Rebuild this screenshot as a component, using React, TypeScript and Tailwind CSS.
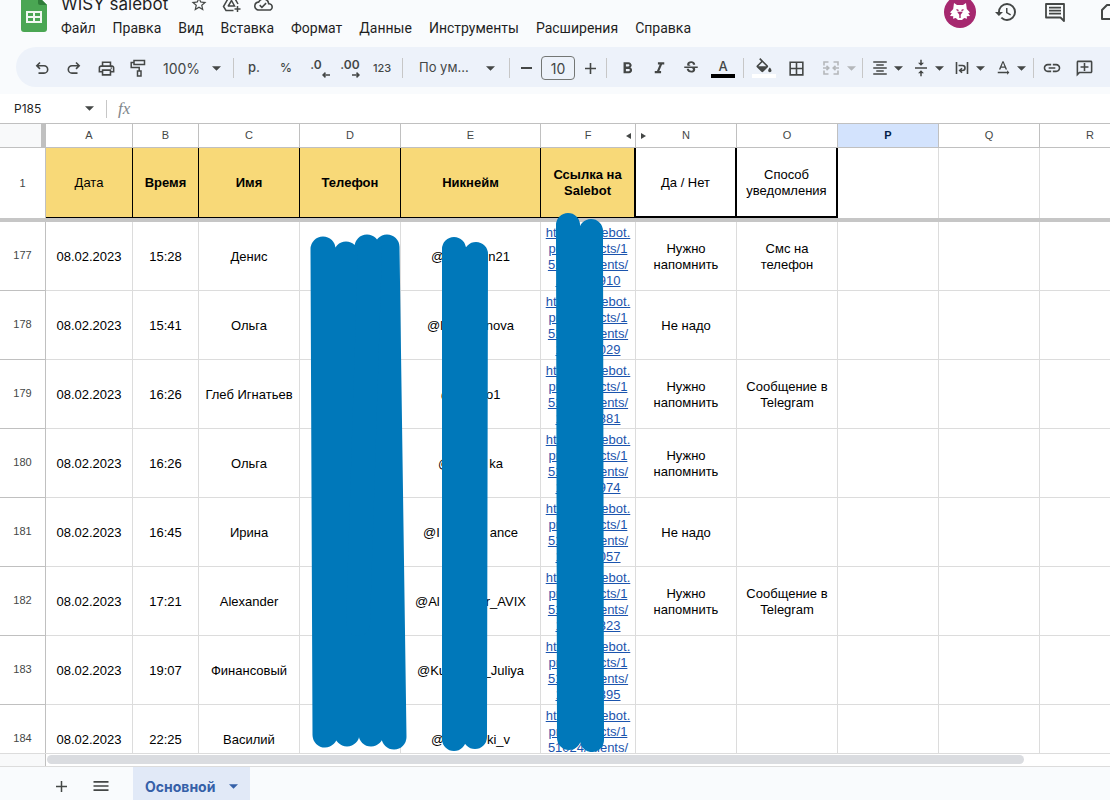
import type { ReactNode } from "react";
import clsx from "clsx";
import {
  MdBorderAll,
  MdFormatAlignCenter,
  MdFormatBold,
  MdFormatItalic,
  MdHistory,
  MdInsertLink,
  MdMenu,
  MdOutlineAddComment,
  MdOutlineCloudDone,
  MdOutlinePrint,
  MdStarOutline,
  MdStrikethroughS,
  MdTextRotationNone,
  MdVerticalAlignCenter,
} from "react-icons/md";

interface Row {
  id: number;
  time: string;
  name: string;
  // the middle of the nickname is painted over, so only its ends are kept
  nick: { start: string; end: string; width: number };
  client?: string;
  answer?: string;
  channel?: string;
}

const menus = [
  "Файл",
  "Правка",
  "Вид",
  "Вставка",
  "Формат",
  "Данные",
  "Инструменты",
  "Расширения",
  "Справка",
];

const columns = [
  { id: "A", width: "w-[87px]", title: "Дата" },
  { id: "B", width: "w-[66px]", title: "Время", bold: true },
  { id: "C", width: "w-[101px]", title: "Имя", bold: true },
  { id: "D", width: "w-[101px]", title: "Телефон", bold: true },
  { id: "E", width: "w-[140px]", title: "Никнейм", bold: true },
  { id: "F", width: "w-[95px]", title: "Ссылка на Salebot", bold: true },
  { id: "N", width: "w-[101px]", title: "Да / Нет" },
  { id: "O", width: "w-[101px]", title: "Способ уведомления" },
  { id: "P", width: "w-[101px]", title: "" },
  { id: "Q", width: "w-[101px]", title: "" },
  { id: "R", width: "w-[101px]", title: "" },
];

const rows: Row[] = [
  { id: 177, time: "15:28", name: "Денис", nick: { start: "@", end: "n21", width: 79 }, client: "100000910", answer: "Нужно напомнить", channel: "Смс на телефон" },
  { id: 178, time: "15:41", name: "Ольга", nick: { start: "@l", end: "nova", width: 87 }, client: "100000029", answer: "Не надо" },
  { id: 179, time: "16:26", name: "Глеб Игнатьев", nick: { start: "@", end: "o1", width: 60 }, client: "100000881", answer: "Нужно напомнить", channel: "Сообщение в Telegram" },
  { id: 180, time: "16:26", name: "Ольга", nick: { start: "@", end: "ka", width: 65 }, client: "100000974", answer: "Нужно напомнить" },
  { id: 181, time: "16:45", name: "Ирина", nick: { start: "@I", end: "ance", width: 95 }, client: "100000057", answer: "Не надо" },
  { id: 182, time: "17:21", name: "Alexander", nick: { start: "@Al", end: "r_AVIX", width: 111 }, client: "100000323", answer: "Нужно напомнить", channel: "Сообщение в Telegram" },
  { id: 183, time: "19:07", name: "Финансовый", nick: { start: "@Ku", end: "_Juliya", width: 107 }, client: "100000395" },
  { id: 184, time: "22:25", name: "Василий", nick: { start: "@", end: "ki_v", width: 79 } },
];

const Caret = ({ className }: { className?: string }) => (
  <svg viewBox="0 0 10 5" className={clsx("h-[5px] w-[9px] shrink-0", className)} fill="currentColor">
    <path d="M0 0h10L5 5z" />
  </svg>
);

const Separator = ({ tight }: { tight?: boolean }) => (
  <span className={clsx("h-5 w-px shrink-0 bg-[#c7c7c7]", tight ? "mx-0.5" : "mx-1")} />
);

const Tool = ({ label, children }: { label: string; children: ReactNode }) => (
  <button aria-label={label} className="flex h-8 w-8 shrink-0 items-center justify-center rounded text-[13px] font-medium">
    {children}
  </button>
);

const MenuTool = ({ label, children }: { label: string; children: ReactNode }) => (
  <button aria-label={label} className="flex h-8 w-[41px] shrink-0 items-center pl-1">
    {children}
    <Caret className="ml-[5px] w-2" />
  </button>
);

const SheetsLogo = () => (
  <svg viewBox="0 0 26 36" className="h-9 w-[26px]">
    <path d="M3 0h14l9 9v24a3 3 0 0 1-3 3H3a3 3 0 0 1-3-3V3a3 3 0 0 1 3-3z" fill="#4aa653" />
    <path d="M17 0l9 9h-7a2 2 0 0 1-2-2z" fill="#2f7d39" />
    <path d="M5 15h16v12H5zM7 17v3h5v-3zm7 0v3h5v-3zm-7 5v3h5v-3zm7 0v3h5v-3z" fill="#f1f8f1" fillRule="evenodd" />
  </svg>
);

const Avatar = () => (
  <svg viewBox="0 0 32 32" className="h-8 w-8">
    <circle cx="16" cy="16" r="16" fill="#a6286f" />
    <path
      d="M10 7l3 2h6l3-2 .8 6 3.200 3.500-1.800 .7 1.800 2.800-3.300 .2.300 2.500-2.800-.7-2.200 2h-4l-2.200-2-2.800 .7.300-2.500-3.300-.2 1.800-2.800-1.800-.7 3.200-3.500z"
      fill="#fff"
    />
    <path d="M12.500 13.500l2 1.200M19.500 13.500l-2 1.200M14.500 16.500h3L16 18.500zM16 18v4" stroke="#a6286f" strokeWidth="1.400" fill="#a6286f" />
  </svg>
);

const CommentsIcon = () => (
  <svg viewBox="0 0 24 24" className="h-6 w-6" fill="none" stroke="currentColor" strokeWidth="1.800">
    <path d="M3 4h18v17l-3.500-3.500H3z" strokeLinejoin="round" />
    <path d="M6 7.700h12M6 10.700h12M6 13.700h12" />
  </svg>
);

const DriveAddIcon = () => (
  <svg viewBox="0 0 20 18" className="h-[18px] w-5" fill="none" stroke="currentColor" strokeWidth="1.500">
    <path d="M11.500 15.500H4L1.500 11.500 7 2h5l4 7" />
    <path d="M6 11.500l3.500-6 3 5.500H6M15.500 11v6M12.500 14h6" />
  </svg>
);

const UndoIcon = ({ className }: { className?: string }) => (
  <svg viewBox="0 0 14 14" className={clsx("h-3.5 w-3.5", className)} fill="none" stroke="currentColor" strokeWidth="1.600">
    <path d="M5 1.500L1.800 4.700 5 7.900M2 4.700h7a3.700 3.700 0 0 1 0 7.400H3.500" />
  </svg>
);

const PaintIcon = () => (
  <svg viewBox="0 0 16 18" className="h-[18px] w-4" fill="none" stroke="currentColor" strokeWidth="1.500">
    <path d="M4 1.500h10.500v4H4zM4 3.500H1.200v5h8V12M7.500 12h3.500v5H7.500z" />
  </svg>
);

const FillIcon = () => (
  <svg viewBox="0 0 24 18" className="h-[15px] w-5" fill="currentColor">
    <path d="M16.560 8.940L7.620 0 6.210 1.410l2.380 2.380-5.150 5.150a1.490 1.490 0 0 0 0 2.120l5.500 5.500c.29.29.68.44 1.060.44s.77-.15 1.060-.44l5.500-5.500c.59-.58.59-1.530 0-2.120zM5.210 10L10 5.210 14.790 10H5.210zM19 11.500s-2 2.170-2 3.500c0 1.100.9 2 2 2s2-.9 2-2c0-1.330-2-3.500-2-3.500z" />
  </svg>
);

const MergeIcon = () => (
  <svg viewBox="0 0 18 18" className="h-[18px] w-[18px]" fill="none" stroke="currentColor" strokeWidth="1.600">
    <path d="M6.500 3H2v3.500M11.500 3H16v3.500M6.500 15H2v-3.500M11.500 15H16v-3.500M1 9h5.500M17 9h-5.500M4.500 6.800L6.800 9l-2.300 2.200M13.500 6.800L11.200 9l2.300 2.200" />
  </svg>
);

const WrapIcon = () => (
  <svg viewBox="0 0 18 18" className="h-[18px] w-[18px]" fill="none" stroke="currentColor" strokeWidth="1.600">
    <path d="M3.500 3v12M14.500 3v12M5.500 6.500h4a2.300 2.300 0 0 1 0 5H7M9 9.200l-2.300 2.300L9 13.800" />
  </svg>
);

const SmallArrow = ({ className }: { className?: string }) => (
  <svg viewBox="0 0 8 6" className={clsx("h-1.5 w-2", className)} fill="none" stroke="currentColor" strokeWidth="1.500">
    <path d="M8 3H1M3.500 .6L1 3l2.500 2.400" />
  </svg>
);

const Header = () => (
  <header className="flex h-[47px] shrink-0 items-end overflow-hidden pb-[7px] pl-[21px] text-[#444746]">
    <div className="mr-3.5 pb-2">
      <SheetsLogo />
    </div>
    <div>
      <div className="flex h-6 items-center">
        <h1 className="text-[17px] leading-6 text-[#1f1f1f]">WISY salebot</h1>
        <button aria-label="Пометить" className="ml-[22px]"><MdStarOutline size={18} /></button>
        <button aria-label="Переместить" className="ml-3.5"><DriveAddIcon /></button>
        <button aria-label="Статус документа" className="ml-3"><MdOutlineCloudDone size={19} /></button>
      </div>
      <nav className="flex h-6 items-center gap-[17px]">
        {menus.map((item) => (
          <button key={item} className="font-[Roboto,sans-serif] text-[14px] leading-5 text-[#1f1f1f]">{item}</button>
        ))}
      </nav>
    </div>
    <div className="-mr-[18px] ml-auto flex items-center gap-[18px] pb-3">
      <Avatar />
      <div className="flex items-center gap-[25px]">
        <button aria-label="История версий"><MdHistory size={24} /></button>
        <button aria-label="Комментарии"><CommentsIcon /></button>
        <button aria-label="Видеовстреча" className="ml-2">
          <svg viewBox="0 0 28 20" className="h-5 w-7" fill="none" stroke="currentColor" strokeWidth="2">
            <path d="M7 3h14v14H2V8z" strokeLinejoin="round" />
          </svg>
        </button>
      </div>
    </div>
  </header>
);

const Toolbar = () => (
  <div role="toolbar" className="ml-4 flex h-10 shrink-0 items-center overflow-hidden rounded-l-full bg-[#edf2fa] pl-2.5 pt-0.5 text-[#444746]">
    <Tool label="Отменить"><UndoIcon /></Tool>
    <Tool label="Повторить"><UndoIcon className="-scale-x-100" /></Tool>
    <Tool label="Печать"><MdOutlinePrint size={19} /></Tool>
    <Tool label="Копировать форматирование"><PaintIcon /></Tool>
    <label className="relative ml-1 flex h-8 w-[71px] shrink-0 items-center">
      <select aria-label="Масштаб" className="w-full appearance-none pl-[5px] text-[14px]">
        <option>100%</option>
      </select>
      <Caret className="pointer-events-none absolute right-2" />
    </label>
    <Separator />
    <Tool label="Денежный формат">р.</Tool>
    <Tool label="Процентный формат"><span className="text-[12px]">%</span></Tool>
    <Tool label="Уменьшить число знаков">
      <span className="relative pb-1.5 pr-1 text-[12px] font-semibold">
        .0
        <SmallArrow className="absolute -right-1 bottom-0.5" />
      </span>
    </Tool>
    <Tool label="Увеличить число знаков">
      <span className="relative pb-1.5 text-[12px] font-semibold">
        .00
        <SmallArrow className="absolute bottom-0.5 right-0 -scale-x-100" />
      </span>
    </Tool>
    <Tool label="Другие форматы"><span className="text-[11px]">123</span></Tool>
    <Separator />
    <label className="relative flex h-8 w-[98px] shrink-0 items-center">
      <select aria-label="Шрифт" className="w-full appearance-none pl-3 text-[13px]">
        <option>По ум...</option>
      </select>
      <Caret className="pointer-events-none absolute right-2.5" />
    </label>
    <Separator />
    <button aria-label="Уменьшить шрифт" className="flex h-6 w-6 shrink-0 items-center justify-center">
      <span className="h-0.5 w-[11px] bg-current" />
    </button>
    <input aria-label="Размер шрифта" defaultValue="10" className="mx-[3px] h-6 w-[34px] shrink-0 rounded border border-[#747775] text-center text-[14px]" />
    <button aria-label="Увеличить шрифт" className="flex h-6 w-6 shrink-0 items-center justify-center">
      <svg viewBox="0 0 11 11" className="h-[11px] w-[11px]" stroke="currentColor" strokeWidth="1.600"><path d="M5.500 0v11M0 5.500h11" /></svg>
    </button>
    <Separator />
    <Tool label="Полужирный"><MdFormatBold size={19} /></Tool>
    <Tool label="Курсив"><MdFormatItalic size={19} /></Tool>
    <Tool label="Зачеркнутый"><MdStrikethroughS size={18} /></Tool>
    <Tool label="Цвет текста">
      <span className="flex w-6 flex-col items-center border-b-4 border-black text-[13px] leading-4">A</span>
    </Tool>
    <Separator />
    <Tool label="Цвет заливки">
      <span className="flex w-6 flex-col items-center border-b-4 border-white pb-px"><FillIcon /></span>
    </Tool>
    <Tool label="Границы"><MdBorderAll size={19} /></Tool>
    <button aria-label="Объединить ячейки" disabled className="flex h-8 w-[46px] shrink-0 items-center pl-2.5 text-[#b4b7ba]">
      <MergeIcon />
      <Caret className="ml-[7px] w-2" />
    </button>
    <Separator />
    <MenuTool label="По горизонтали"><MdFormatAlignCenter size={18} /></MenuTool>
    <MenuTool label="По вертикали"><MdVerticalAlignCenter size={18} /></MenuTool>
    <MenuTool label="Перенос текста"><WrapIcon /></MenuTool>
    <MenuTool label="Поворот текста"><MdTextRotationNone size={18} /></MenuTool>
    <Separator tight />
    <Tool label="Вставить ссылку"><MdInsertLink size={20} /></Tool>
    <Tool label="Добавить комментарий"><MdOutlineAddComment size={19} className="-scale-x-100" /></Tool>
  </div>
);

const FormulaBar = () => (
  <div className="mt-[7px] flex h-[30px] shrink-0 items-center border-b border-[#c0c0c0] bg-white pl-3.5">
    <input aria-label="Ячейка" defaultValue="P185" className="w-[71px] text-[12px] text-[#1f1f1f]" />
    <button aria-label="Список диапазонов"><Caret className="text-[#444746]" /></button>
    <span className="ml-3 h-[18px] w-px bg-[#c7c7c7]" />
    <label htmlFor="formula" className="ml-[11px] font-['Liberation_Serif'] text-[17px] italic text-[#80868b]">fx</label>
    <input id="formula" className="ml-3 min-w-0 flex-1" />
  </div>
);

// marker strokes over the private columns, drawn from the sheet's top left corner
const Strokes = () => (
  <svg className="pointer-events-none absolute left-0 top-0 h-full w-[640px]" fill="none" stroke="#0078ba" strokeWidth="24" strokeLinecap="round">
    <path d="M323 125L325 611M346 130L347 610M367 123L371 610M387 123L394 613" strokeWidth="25" />
    <path d="M370 126L358 500" />
    <path d="M454 125V615M476 130L475 613" />
    <path d="M568 101L569 614M591 107L592 616" />
  </svg>
);

const cell = "h-[69px] border-b border-r border-[#dcdcdc] px-0.5 pt-0.5 align-middle";

const Sheet = () => (
  <main className="relative min-h-0 flex-1 overflow-hidden bg-white">
    <table className="w-[1141px] table-fixed border-separate border-spacing-0 text-center font-['Liberation_Sans',sans-serif] text-[13px] leading-4 text-black">
      <thead>
        <tr className="text-[11px] text-[#444746]">
          <td className="h-6 w-[46px] border-b border-r-[5px] border-[#c0c0c0] bg-[#f8f9fa]" />
          {columns.map(({ id, width }) => (
            <th
              key={id}
              scope="col"
              className={clsx("relative h-6 border-b border-r border-[#c0c0c0] p-0 pb-0.5", width, id === "P" ? "bg-[#d3e3fd] font-bold text-[#041e49]" : "font-normal")}
            >
              {id}
              {id === "F" && <span className="absolute right-1 top-[9px] border-y-[3px] border-r-[5px] border-y-transparent border-r-[#444746]" />}
              {id === "N" && <span className="absolute left-[5px] top-[9px] border-y-[3px] border-l-[5px] border-y-transparent border-l-[#444746]" />}
            </th>
          ))}
        </tr>
        <tr>
          <th scope="row" className="h-[70px] border-r border-[#c0c0c0] text-[11px] font-normal text-[#444746]">1</th>
          {columns.map(({ id, title, bold }) => (
            <td
              key={id}
              className={clsx(
                "h-[70px] px-0.5 align-middle",
                bold && "font-bold",
                "ABCDEF".includes(id) && "border-b border-black bg-[#f8d978]",
                "ABCDE".includes(id) && "border-r",
                id === "F" && "border-r-2",
                "NO".includes(id) && "border-b-2 border-r-2 border-black pt-0.5",
                "PQR".includes(id) && "border-r border-[#dcdcdc]",
              )}
            >
              {title}
            </td>
          ))}
        </tr>
        <tr>
          <td colSpan={12} className="h-1 bg-[#c6c6c6] p-0" />
        </tr>
      </thead>
      <tbody>
        {rows.map(({ id, time, name, nick, client, answer, channel }) => (
          <tr key={id}>
            <th scope="row" className="h-[69px] border-b border-r border-[#c0c0c0] pb-0.5 text-[11px] font-normal text-[#444746]">{id}</th>
            <td className={cell}>08.02.2023</td>
            <td className={cell}>{time}</td>
            <td className={cell}>{name}</td>
            <td className={cell} />
            <td className={cell}>
              <div className="mx-auto flex justify-between" style={{ width: nick.width }}>
                <span>{nick.start}</span>
                <span>{nick.end}</span>
              </div>
            </td>
            <td className={cell}>
              <a href="#" className="text-[#1b54ad] underline">
                https://salebot.<br />pro/projects/1<br />51024/clients/<br />{client ?? "\u00a0"}
              </a>
            </td>
            <td className={cell}>{answer}</td>
            <td className={cell}>{channel}</td>
            <td className={cell} />
            <td className={cell} />
            <td className={cell} />
          </tr>
        ))}
      </tbody>
    </table>
    <Strokes />
  </main>
);

const Footer = () => (
  <footer className="shrink-0">
    <div className="flex h-3.5 border-y border-[#dcdcdc] bg-white">
      <div className="w-[46px] border-r border-[#c0c0c0] bg-[#f8f9fa]" />
      <div className="flex-1 px-px pt-px">
        <div className="h-[9px] w-[92%] rounded-full bg-[#dadce0]" />
      </div>
    </div>
    <div className="flex h-[33px] overflow-hidden text-[#444746]">
      <div className="flex h-[38px] items-center">
        <button aria-label="Добавить лист" className="ml-[45px] flex w-8 justify-center">
          <svg viewBox="0 0 11 11" className="h-[11px] w-[11px]" stroke="currentColor" strokeWidth="1.500"><path d="M5.500 0v11M0 5.500h11" /></svg>
        </button>
        <button aria-label="Все листы" className="ml-2 flex w-8 justify-center"><MdMenu size={20} /></button>
        <button className="ml-4 flex h-full items-center gap-3.5 bg-[#e1e9f7] px-3 text-[14px] font-bold text-[#3560a8]">
          Основной
          <Caret className="w-2" />
        </button>
      </div>
    </div>
  </footer>
);

const App = () => (
  <div className="flex h-screen flex-col overflow-hidden bg-[#f9fbfd] font-[Inter,sans-serif]">
    <Header />
    <Toolbar />
    <FormulaBar />
    <Sheet />
    <Footer />
  </div>
);

export default App;
